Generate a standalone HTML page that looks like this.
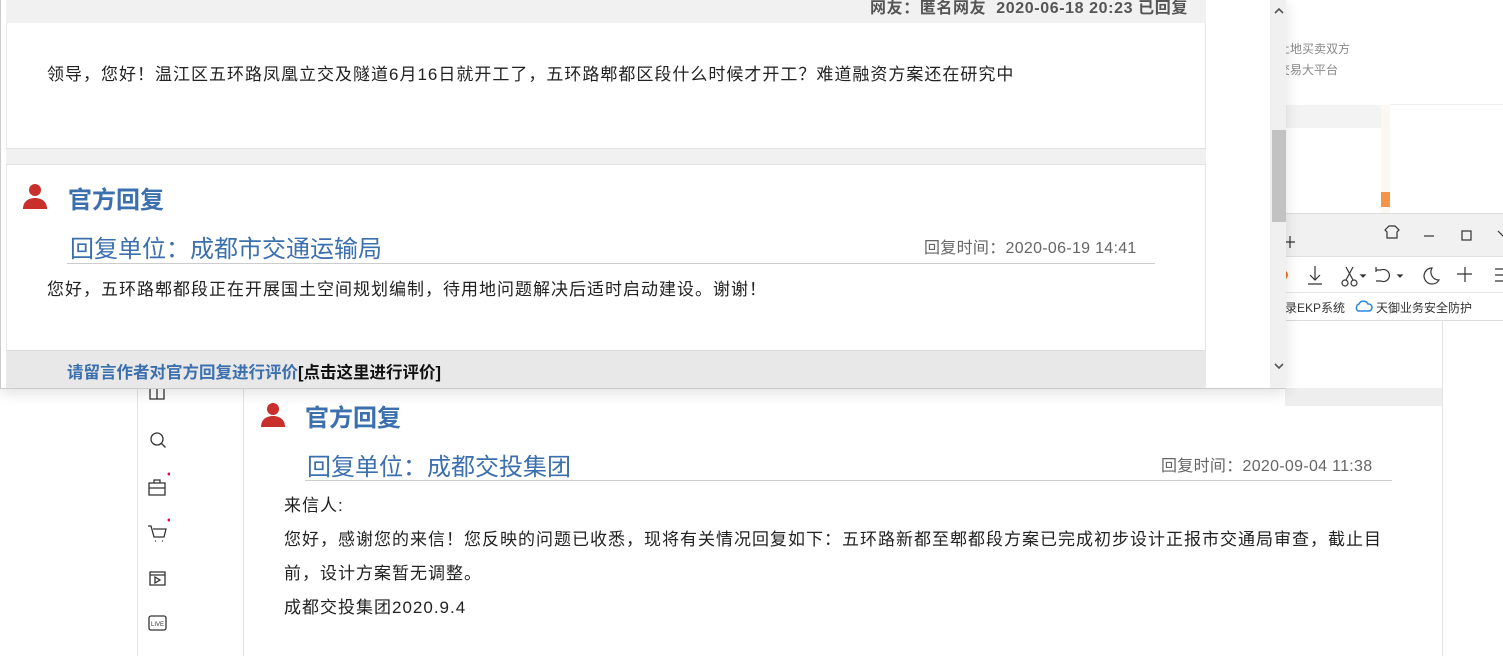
<!DOCTYPE html>
<html><head><meta charset="utf-8"><style>
*{margin:0;padding:0;box-sizing:border-box}
body{width:1503px;height:656px;overflow:hidden;background:#fff;position:relative;font-family:"Liberation Sans","Noto Sans CJK SC",sans-serif;color:#222}
.a{position:absolute;white-space:nowrap}
.blue{color:#3b6fae}
.gray{color:#666}
.t{font-size:17px;letter-spacing:1px}
</style></head><body>
<div class="a" style="left:137px;top:380px;width:1px;height:276px;background:#e4e4e4"></div>
<div class="a" style="left:243px;top:380px;width:1px;height:276px;background:#e4e4e4"></div>
<div class="a" style="left:1442px;top:320px;width:1px;height:336px;background:#e4e4e4"></div>
<div class="a" style="left:1285px;top:388px;width:157px;height:18px;background:#eeeeee"></div>
<svg class="a" style="left:146px;top:385px" width="24" height="260" fill="none" stroke="#333" stroke-width="1.3">
<path d="M4 3h7v11H4zM11 3h7v11h-7z"/>
<circle cx="11" cy="54" r="6"/><path d="M15.5 58.5l4 4"/>
<path d="M3 98h16v12H3zM3 103h16M8 98v-3h6v3"/><circle cx="23" cy="89" r="1.5" fill="#e04" stroke="none"/>
<path d="M2 141h3l3 11h10l2-8H7M9 156h1M16 156h1"/><circle cx="23" cy="135" r="1.5" fill="#e04" stroke="none"/>
<path d="M4 187h15v13H4zM4 190h15M9 192v6l5-3z"/>
<rect x="3" y="231" width="17" height="14" rx="2"/>
<text x="11.5" y="241" font-size="6" text-anchor="middle" fill="#333" stroke="none" font-family="Liberation Sans">LIVE</text>
</svg>
<svg class="a" style="left:260px;top:402px" width="28" height="26"><circle cx="13" cy="7" r="6" fill="#c9302c"/><path d="M1 25c0-8 6-11 12-11s12 3 12 11z" fill="#c9302c"/></svg>
<div class="a blue" style="left:305px;top:398px;font-size:24px;font-weight:bold">官方回复</div>
<div class="a blue" style="left:307px;top:447px;font-size:24px">回复单位：成都交投集团</div>
<div class="a gray" style="left:1161px;top:452px;font-size:16px;letter-spacing:.3px">回复时间：2020-09-04 11:38</div>
<div class="a" style="left:305px;top:480px;width:1087px;height:1px;background:#ccc"></div>
<div class="a t" style="left:284px;top:489px;line-height:34px;white-space:normal;width:1105px">来信人:<br>您好，感谢您的来信！您反映的问题已收悉，现将有关情况回复如下：五环路新都至郫都段方案已完成初步设计正报市交通局审查，截止目前，设计方案暂无调整。<br>成都交投集团2020.9.4</div>

<div class="a gray" style="left:1278px;top:39px;font-size:12px;line-height:21px;color:#888">土地买卖双方<br>交易大平台</div>
<div class="a" style="left:1285px;top:105px;width:96px;height:23px;background:#f3f3f3"></div>
<div class="a" style="left:1381px;top:105px;width:9px;height:108px;background:#fbf8f1"></div>
<div class="a" style="left:1381px;top:192px;width:9px;height:15px;background:#f6944a"></div>
<div class="a" style="left:1390px;top:104px;width:113px;height:1px;background:#eee"></div>
<div class="a" style="left:1285px;top:213px;width:218px;height:43px;background:#f1f1f1;border-top:1px solid #ddd"></div>
<div class="a" style="left:1285px;top:256px;width:218px;height:37px;background:#fff;border-top:1px solid #e0e0e0;border-bottom:1px solid #e6e6e6"></div>
<div class="a" style="left:1285px;top:293px;width:218px;height:28px;background:#fff;border-bottom:1px solid #ddd"></div>
<svg class="a" style="left:1285px;top:213px" width="218" height="108" fill="none" stroke="#333" stroke-width="1.2">
<path d="M0 29h10M5 23v12"/>
<path d="M100 17l4-4h6l4 4-2 2v6h-10v-6z"/>
<path d="M139 23h10"/>
<rect x="177" y="18" width="9" height="9"/>
<path d="M213 18l6 6"/>
<circle cx="-2" cy="62" r="5" fill="#f07020" stroke="none"/>
<path d="M30 53v14M25 62l5 5 5-5M23 71h14"/>
<circle cx="60" cy="70" r="3"/><circle cx="69" cy="70" r="3"/><path d="M61 67l7-13M68 67l-7-13"/><path d="M76 62l2 2 2-2z" fill="#333"/>
<path d="M96 57a6 6 0 1 1 0 11h-5M96 57h-5M91 54v5"/><path d="M113 62l2 2 2-2z" fill="#333"/>
<path d="M147 55a8 8 0 1 0 7 12a8 8 0 0 1-7-12z"/>
<path d="M180 54v15M172 61h15"/>
<path d="M210 56h8M210 62h8M210 68h8"/>
<path d="M73 98a4 4 0 0 1 1-7a5 5 0 0 1 9 0a3.5 3.5 0 0 1 1 7z" stroke="#2a8ae0" stroke-width="1.5"/>
</svg>
<div class="a" style="left:1285px;top:299px;font-size:12px;color:#333">录EKP系统</div>
<div class="a" style="left:1376px;top:299px;font-size:12px;color:#333">天御业务安全防护</div>

<div class="a" style="left:0;top:0;width:1286px;height:389px;background:#fff;border:1px solid #ccc;border-top:none;box-shadow:0 4px 14px rgba(0,0,0,.12)">
 <div class="a" style="left:5px;top:0;width:1200px;height:23px;background:#f1f1f1"></div>
 <div class="a gray" style="left:869px;top:-6px;font-size:16px;font-weight:bold;color:#555;letter-spacing:.6px">网友：匿名网友&nbsp; 2020-06-18 20:23 已回复</div>
 <div class="a" style="left:5px;top:23px;width:1200px;height:126px;border:1px solid #e6e6e6;border-top:none;border-bottom:none"></div>
 <div class="a t" style="left:46px;top:60px">领导，您好！温江区五环路凤凰立交及隧道6月16日就开工了，五环路郫都区段什么时候才开工？难道融资方案还在研究中</div>
 <div class="a" style="left:5px;top:148px;width:1200px;height:17px;background:#f1f1f1;border-top:1px solid #e2e2e2;border-bottom:1px solid #e2e2e2"></div>
 <div class="a" style="left:5px;top:165px;width:1200px;height:186px;border-left:1px solid #e6e6e6;border-right:1px solid #e6e6e6"></div>
 <svg class="a" style="left:21px;top:183px" width="28" height="26"><circle cx="13" cy="7" r="6" fill="#c9302c"/><path d="M1 26c0-8 6-11 12-11s12 3 12 11z" fill="#c9302c"/></svg>
 <div class="a blue" style="left:67px;top:180px;font-size:24px;font-weight:bold">官方回复</div>
 <div class="a blue" style="left:69px;top:229px;font-size:24px">回复单位：成都市交通运输局</div>
 <div class="a gray" style="left:923px;top:234px;font-size:16px;letter-spacing:.3px">回复时间：2020-06-19 14:41</div>
 <div class="a" style="left:66px;top:263px;width:1088px;height:1px;background:#ccc"></div>
 <div class="a t" style="left:46px;top:275px">您好，五环路郫都段正在开展国土空间规划编制，待用地问题解决后适时启动建设。谢谢！</div>
 <div class="a" style="left:5px;top:350px;width:1200px;height:38px;background:#e8e8e8;border-top:1px solid #ddd"></div>
 <div class="a" style="left:66px;top:359px;font-size:16.5px;font-weight:bold"><span class="blue">请留言作者对官方回复进行评价</span><span style="color:#111">[点击这里进行评价]</span></div>
 <div class="a" style="left:1269px;top:0;width:16px;height:388px;background:#f0f0f0"></div>
 <div class="a" style="left:1271px;top:130px;width:14px;height:92px;background:#c2c2c2"></div>
 <svg class="a" style="left:1271px;top:0" width="14" height="388" fill="none" stroke="#555" stroke-width="1.6"><path d="M3 13l4-4 4 4M3 364l4 4 4-4"/></svg>
</div>
</body></html>
